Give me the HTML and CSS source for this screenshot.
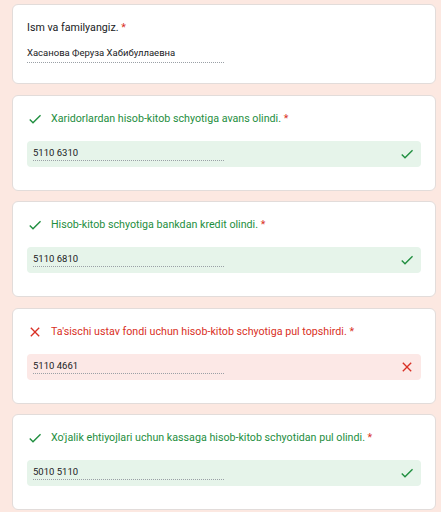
FILE: index.html
```html
<!DOCTYPE html>
<html lang="uz">
<head>
<meta charset="utf-8">
<title>Quiz</title>
<link rel="stylesheet" href="styles.css">
</head>
<body>
<div class="page">
  <div class="card first">
    <div class="title"><span>Ism va familyangiz.<span class="req"> *</span></span></div>
    <div class="plain-answer"><span class="val">Хасанова Феруза Хабибуллаевна</span></div>
  </div>

  <div class="card ok">
    <div class="title"><svg class="ticon" viewBox="0 0 24 24"><path d="M9 16.17L4.83 12l-1.42 1.41L9 19 21 7l-1.41-1.41z"/></svg><span>Xaridorlardan hisob-kitob schyotiga avans olindi.<span class="req"> *</span></span></div>
    <div class="box"><span class="val">5110 6310</span><svg class="bicon" viewBox="0 0 24 24"><path d="M9 16.17L4.83 12l-1.42 1.41L9 19 21 7l-1.41-1.41z"/></svg></div>
  </div>

  <div class="card ok">
    <div class="title"><svg class="ticon" viewBox="0 0 24 24"><path d="M9 16.17L4.83 12l-1.42 1.41L9 19 21 7l-1.41-1.41z"/></svg><span>Hisob-kitob schyotiga bankdan kredit olindi.<span class="req"> *</span></span></div>
    <div class="box"><span class="val">5110 6810</span><svg class="bicon" viewBox="0 0 24 24"><path d="M9 16.17L4.83 12l-1.42 1.41L9 19 21 7l-1.41-1.41z"/></svg></div>
  </div>

  <div class="card bad">
    <div class="title"><svg class="ticon" viewBox="0 0 24 24"><path d="M19 6.41L17.59 5 12 10.59 6.41 5 5 6.41 10.59 12 5 17.59 6.41 19 12 13.41 17.59 19 19 17.59 13.41 12z"/></svg><span>Ta'sischi ustav fondi uchun hisob-kitob schyotiga pul topshirdi.<span class="req"> *</span></span></div>
    <div class="box"><span class="val">5110 4661</span><svg class="bicon" viewBox="0 0 24 24"><path d="M19 6.41L17.59 5 12 10.59 6.41 5 5 6.41 10.59 12 5 17.59 6.41 19 12 13.41 17.59 19 19 17.59 13.41 12z"/></svg></div>
  </div>

  <div class="card ok">
    <div class="title"><svg class="ticon" viewBox="0 0 24 24"><path d="M9 16.17L4.83 12l-1.42 1.41L9 19 21 7l-1.41-1.41z"/></svg><span>Xo'jalik ehtiyojlari uchun kassaga hisob-kitob schyotidan pul olindi.<span class="req"> *</span></span></div>
    <div class="box"><span class="val">5010 5110</span><svg class="bicon" viewBox="0 0 24 24"><path d="M9 16.17L4.83 12l-1.42 1.41L9 19 21 7l-1.41-1.41z"/></svg></div>
  </div>
</div>
</body>
</html>
```
FILE: styles.css
```css
html, body {
  margin: 0;
  padding: 0;
  background: #fce8e1;
  font-family: Roboto, "Liberation Sans", Arial, sans-serif;
}
.page {
  display: flex;
  flex-direction: column;
  gap: 10.5px;
  padding: 4px 5px 4px 12px;
}
.card {
  background: #fff;
  border: 1px solid #e2dcda;
  border-radius: 6px;
  padding: 15px 14px 23px 14px;
}
.title {
  display: flex;
  align-items: center;
  gap: 8px;
  font-size: 10.7px;
  line-height: 16px;
  color: #202124;
}
.req { color: #d93025; }
.ok .title { color: #1e8e3e; }
.bad .title { color: #d93025; }
.ticon {
  width: 16px;
  height: 16px;
  flex: none;
  fill: currentColor;
}
.plain-answer {
  display: flex;
  margin-top: 10px;
}
.plain-answer .val {
  display: block;
  width: 197px;
  font-size: 9.5px;
  line-height: 14px;
  color: #202124;
  padding-bottom: 2px;
  border-bottom: 1px dotted #9aa0a6;
}
.card.first { padding-bottom: 20px; }
.box {
  margin-top: 14px;
  height: 26px;
  box-sizing: border-box;
  border-radius: 4px;
  display: flex;
  align-items: flex-start;
  justify-content: space-between;
  padding: 5px 6px 0 6px;
}
.ok .box { background: #e6f4ea; }
.bad .box { background: #fce8e6; }
.box .val {
  display: block;
  width: 191px;
  font-size: 9.5px;
  line-height: 14px;
  color: #202124;
  border-bottom: 1px dotted #9aa0a6;
}
.bicon {
  width: 16px;
  height: 16px;
  flex: none;
  fill: #1e8e3e;
}
.bad .bicon { fill: #d93025; }
```
